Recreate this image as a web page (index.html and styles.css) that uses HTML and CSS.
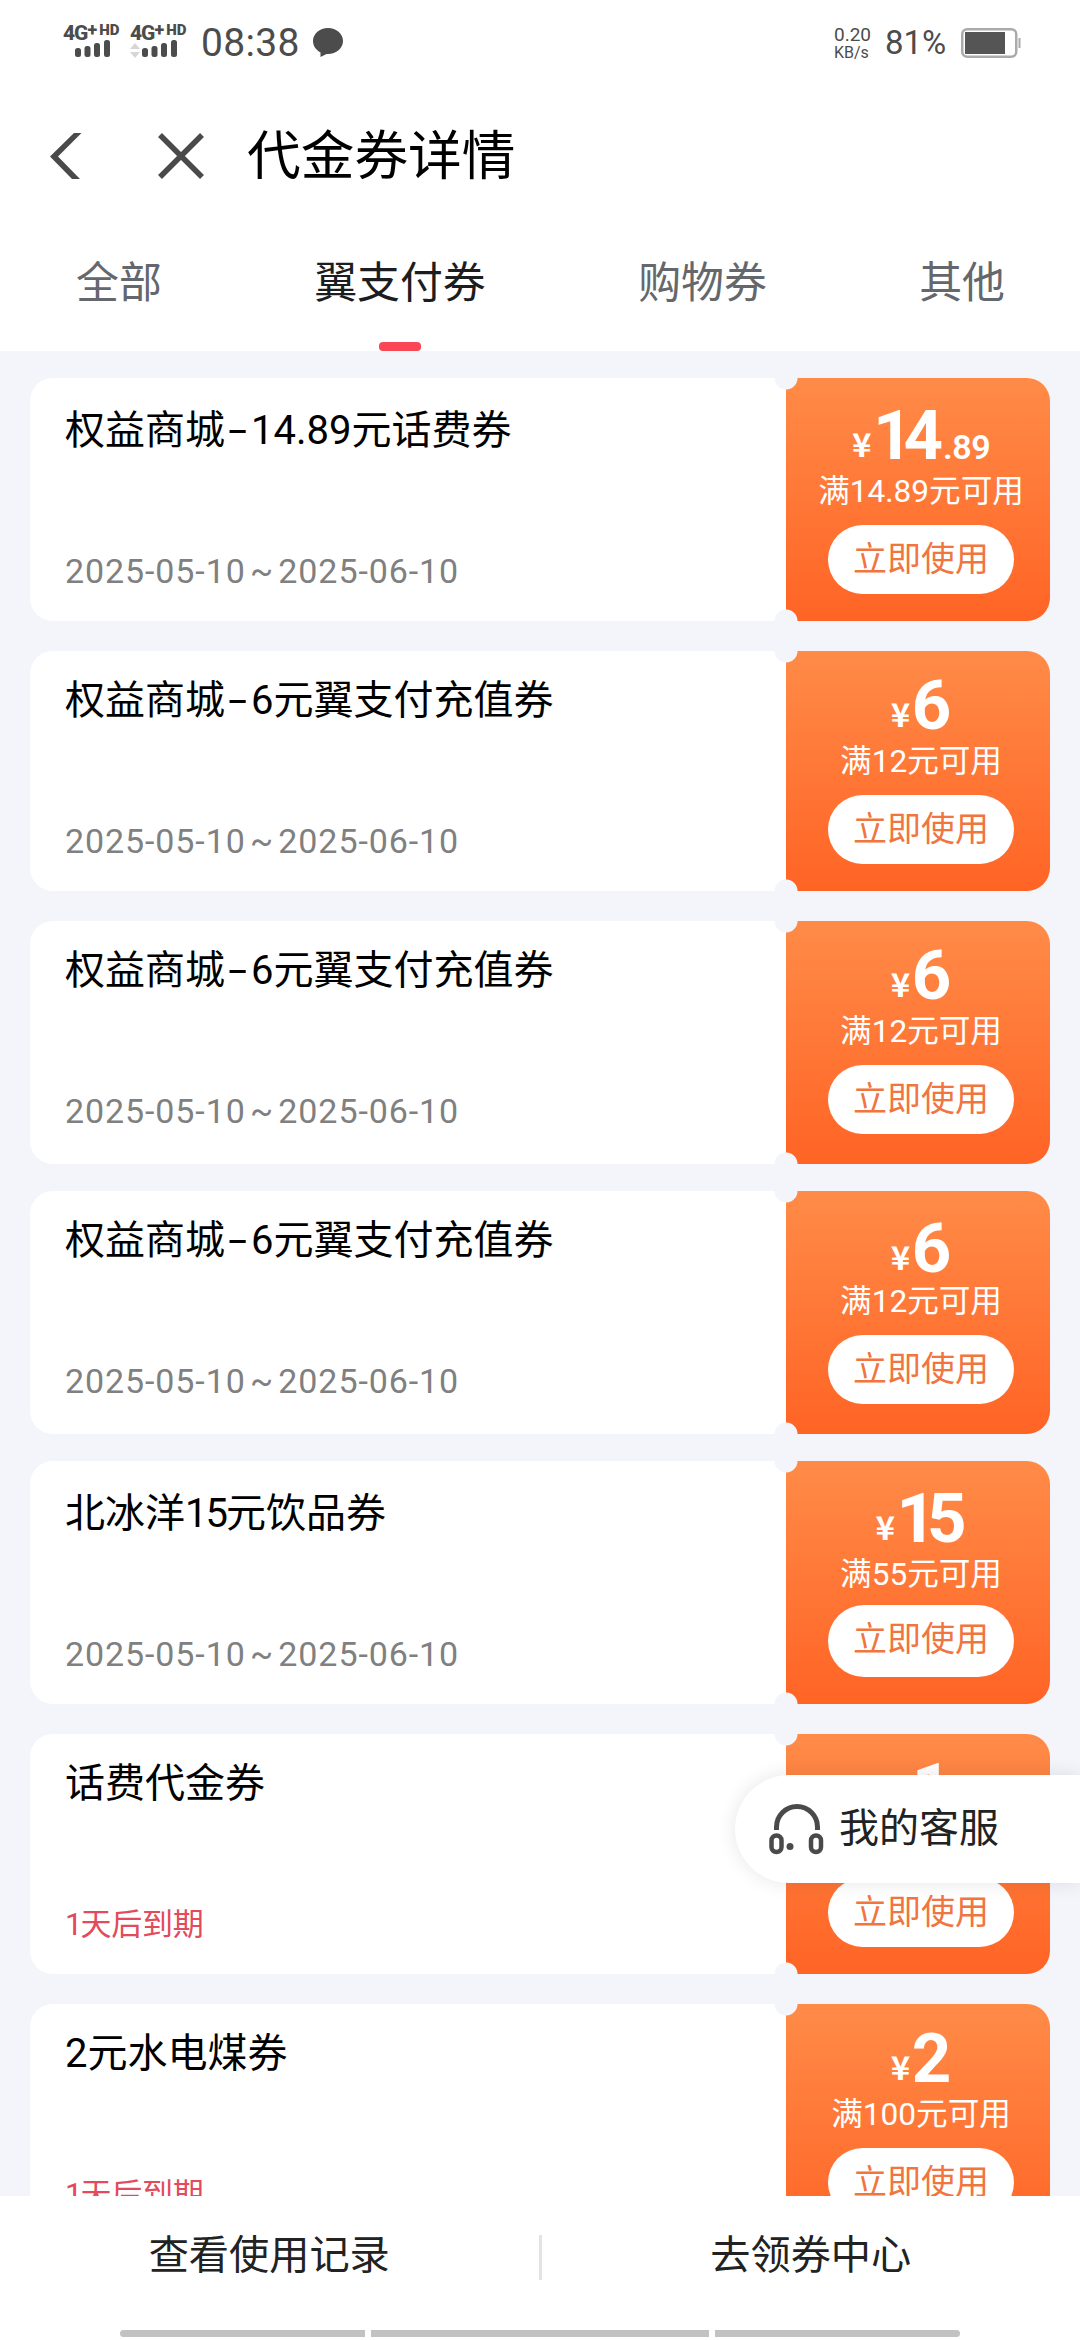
FILE: index.html
```html
<!DOCTYPE html>
<html lang="zh-CN">
<head>
<meta charset="utf-8">
<title>代金券详情</title>
<link rel="stylesheet" href="styles.css">
</head>
<body>
<div class="screen">
  <header class="statusbar">
    <div class="signal">
      <div class="net">4G<sup class="plus">+</sup><sup class="hd">HD</sup></div>
      <svg class="bars" width="52" height="18" viewBox="0 0 52 18"><g fill="#4c4c4c"><rect x="12" y="8" width="6" height="9" rx="2.5"/><rect x="21.500" y="6" width="6" height="11" rx="2.5"/><rect x="31" y="3" width="6" height="14" rx="2.500"/><rect x="41" y="0" width="6" height="17" rx="2.5"/></g></svg>
    </div>
    <div class="signal">
      <div class="net">4G<sup class="plus">+</sup><sup class="hd">HD</sup></div>
      <svg class="bars" width="52" height="18" viewBox="0 0 52 18"><path d="M0 9l5-6 5 6zM0 12l5 6 5-6z" fill="#d6d6d6"/><g fill="#4c4c4c"><rect x="12" y="8" width="6" height="9" rx="2.5"/><rect x="21.500" y="6" width="6" height="11" rx="2.5"/><rect x="31" y="3" width="6" height="14" rx="2.5"/><rect x="41" y="0" width="6" height="17" rx="2.5"/></g></svg>
    </div>
    <div class="clock">08:38</div>
    <svg class="chat" width="30" height="29" viewBox="0 0 30 29"><path d="M15 0C6.700 0 0 5.700 0 13c0 5 3 9 7.500 11.500V29l6-3H15c8.300 0 15-5.700 15-13S23.300 0 15 0z" fill="#4c4c4c"/></svg>
    <div class="speed"><span>0.20</span><span class="unit">KB/s</span></div>
    <div class="percent">81%</div>
    <svg class="battery" width="60" height="30" viewBox="0 0 60 30"><rect x="1.250" y="1.250" width="54" height="27.500" rx="5" fill="none" stroke="#aaa" stroke-width="2.5"/><rect x="4" y="4" width="40" height="22" fill="#555"/><path d="M58.500 10v10" stroke="#aaa" stroke-width="2"/></svg>
  </header>

  <div class="titlebar">
    <svg class="back" width="32" height="46" viewBox="0 0 32 46"><path d="M31.500 0H24L0 23.500 22 46h8L8 23.500z" fill="#4a4a4a"/></svg>
    <svg class="close" width="46" height="46" viewBox="0 0 46 46"><path d="M2 2l42 42M44 2L2 44" stroke="#4a4a4a" stroke-width="5.500"/></svg>
    <h1 class="title">代金券详情</h1>
  </div>

  <nav class="tabs">
    <a class="tab">全部</a>
    <a class="tab tab-active">翼支付券</a>
    <a class="tab">购物券</a>
    <a class="tab">其他</a>
  </nav>

  <main class="list">
    <article class="coupon coupon-low">
      <div class="info"><h2 class="name">权益商城<span class="dash">-</span>14.89元话费券</h2><p class="date">2025-05-10 ~ 2025-06-10</p></div>
      <div class="offer"><p class="amount"><span class="yen">¥</span><b class="num pair">14</b><span class="cents">.89</span></p><p class="rule">满14.89元可用</p><a class="use">立即使用</a></div>
    </article>
    <article class="coupon coupon-short">
      <div class="info"><h2 class="name">权益商城<span class="dash">-</span>6元翼支付充值券</h2><p class="date">2025-05-10 ~ 2025-06-10</p></div>
      <div class="offer"><p class="amount"><span class="yen">¥</span><b class="num">6</b></p><p class="rule">满12元可用</p><a class="use">立即使用</a></div>
    </article>
    <article class="coupon">
      <div class="info"><h2 class="name">权益商城<span class="dash">-</span>6元翼支付充值券</h2><p class="date">2025-05-10 ~ 2025-06-10</p></div>
      <div class="offer"><p class="amount"><span class="yen">¥</span><b class="num">6</b></p><p class="rule">满12元可用</p><a class="use">立即使用</a></div>
    </article>
    <article class="coupon">
      <div class="info"><h2 class="name">权益商城<span class="dash">-</span>6元翼支付充值券</h2><p class="date">2025-05-10 ~ 2025-06-10</p></div>
      <div class="offer"><p class="amount amount-low"><span class="yen">¥</span><b class="num">6</b></p><p class="rule">满12元可用</p><a class="use">立即使用</a></div>
    </article>
    <article class="coupon coupon-low">
      <div class="info"><h2 class="name">北冰洋<span class="tight">15</span>元饮品券</h2><p class="date">2025-05-10 ~ 2025-06-10</p></div>
      <div class="offer"><p class="amount"><span class="yen">¥</span><b class="num pair">15</b></p><p class="rule rule-short">满55元可用</p><a class="use use-tall">立即使用</a></div>
    </article>
    <article class="coupon coupon-short">
      <div class="info"><h2 class="name">话费代金券</h2><p class="date date-soon"><span class="tight">1</span>天后到期</p></div>
      <div class="offer"><p class="amount"><span class="yen">¥</span><b class="num">1</b></p><p class="rule"></p><a class="use">立即使用</a></div>
    </article>
    <article class="coupon">
      <div class="info"><h2 class="name">2元水电煤券</h2><p class="date date-soon"><span class="tight">1</span>天后到期</p></div>
      <div class="offer"><p class="amount"><span class="yen">¥</span><b class="num">2</b></p><p class="rule">满100元可用</p><a class="use">立即使用</a></div>
    </article>
  </main>

  <footer class="footer">
    <div class="actions">
      <a class="action">查看使用记录</a>
      <a class="action">去领券中心</a>
    </div>
    <div class="gestures"><i class="g g-left"></i><i class="g g-mid"></i><i class="g g-right"></i></div>
  </footer>

  <a class="service">
    <svg width="56" height="53" viewBox="0 0 56 53"><g fill="none" stroke="#4a4a4a"><path d="M7.500 27V24a20.500 20.500 0 0 1 41 0v3" stroke-width="5"/><rect x="2.500" y="32.500" width="10" height="16.500" rx="5" stroke-width="4.500"/><rect x="42" y="32.500" width="10" height="16.500" rx="5" stroke-width="4.500"/></g><circle cx="21" cy="43.500" r="3.500" fill="#4a4a4a"/></svg>
    <span>我的客服</span>
  </a>
</div>
</body>
</html>
```
FILE: styles.css
```css
* { box-sizing: border-box; margin: 0; padding: 0; }
body {
  background: #fff;
  color: #000;
  font-family: Roboto, "Noto Sans CJK SC", sans-serif;
  font-weight: 400;
}
h1, h2 { font-weight: 400; }
.screen {
  position: relative;
  display: flex;
  flex-direction: column;
  width: 1080px;
  height: 2340px;
  overflow: hidden;
}

/* status bar */
.statusbar {
  display: flex;
  align-items: flex-start;
  height: 108px;
  padding: 24px 59px 0 63px;
  color: #4c4c4c;
}
.signal { display: flex; flex-direction: column; width: 67px; }
.net { display: flex; height: 16px; font-size: 21px; font-weight: 800; line-height: 19px; letter-spacing: -1px; }
.plus { font-size: 18px; line-height: 12px; }
.hd { padding-left: 3px; font-size: 15px; font-weight: 900; line-height: 13px; letter-spacing: 0; }
.bars { display: block; }
.clock { width: 111px; padding-left: 4px; font-size: 39px; line-height: 38px; letter-spacing: .3px; }
.chat { margin-top: 4px; margin-left: 5px; }
.speed { display: flex; flex-direction: column; width: 40px; margin-left: auto; font-size: 19px; line-height: 22px; }
.unit { font-size: 16px; line-height: 13px; }
.percent { width: 62px; margin-left: 11px; font-size: 33px; font-weight: 400; line-height: 38px; }
.battery { margin-top: 4px; margin-left: 14px; }

/* title */
.titlebar { display: flex; align-items: center; height: 96px; padding-left: 50px; }
.close { margin-left: 76px; }
.title { margin-left: 43px; padding-top: 2px; font-size: 53.700px; line-height: 90px; }

/* tabs */
.tabs {
  display: flex;
  justify-content: space-between;
  flex: none;
  height: 147px;
  padding: 0 75px 0 76px;
}
.tab {
  display: flex;
  flex-direction: column;
  align-items: center;
  font-size: 42.900px;
  line-height: 158px;
  color: #64676c;
}
.tab-active { color: #1c1d20; }
.tab-active::after {
  content: "";
  width: 42px;
  height: 9px;
  margin-top: -20px;
  border-radius: 4px;
  background: #fb4655;
}

/* coupons */
.list {
  display: grid;
  grid-template-rows: 273px 270px 270px 270px 273px 270px 243px;
  align-items: start;
  flex: none;
  height: 1845px;
  padding: 27px 30px 0;
  overflow: hidden;
  background: #f4f5fa;
}
.coupon {
  display: flex;
  height: 243px;
  border-radius: 23px;
  background: #fff;
  overflow: hidden;
}
.coupon-short { height: 240px; }
.info {
  display: flex;
  flex-direction: column;
  flex: 1;
  padding: 20px 35px 0;
  background:
    radial-gradient(circle at 100% 0, #f4f5fa 11px, transparent 12px),
    radial-gradient(circle at 100% 100%, #f4f5fa 11px, transparent 12px);
}
.name { height: 140px; font-size: 40px; line-height: 60px; white-space: nowrap; }
.dash { display: inline-block; transform: scaleX(1.700); margin: 0 8px 0 7px; }
.tight { letter-spacing: -2px; }
.date { font-size: 34px; line-height: 60px; letter-spacing: .9px; word-spacing: -5px; color: #808080; }
.date-soon { font-size: 31px; line-height: 61px; letter-spacing: -.2px; color: #e34a5b; }
.offer {
  display: flex;
  flex-direction: column;
  align-items: center;
  width: 264px;
  padding: 15px 0 0 6px;
  color: #fff;
  background:
    radial-gradient(circle at 0 0, #f4f5fa 11px, transparent 12px),
    radial-gradient(circle at 0 100%, #f4f5fa 11px, transparent 12px),
    linear-gradient(#ff8b48, #ff6425);
}
.amount { display: flex; align-items: baseline; height: 76px; line-height: 80px; white-space: nowrap; }
.amount-low { padding-top: 3px; }
.yen { width: 20px; margin-right: 1px; font-family: "Noto Sans CJK SC", sans-serif; font-size: 33px; font-weight: 700; transform: translateY(-2px); }
.num { font-size: 69px; font-weight: 700; }
.pair { letter-spacing: -9px; padding-right: 9px; }
.cents { font-size: 34px; font-weight: 600; letter-spacing: -.5px; }
.rule { height: 53px; font-size: 31.600px; line-height: 39px; }
.rule-short { height: 50px; }
.use {
  width: 186px;
  height: 69px;
  border-radius: 36px;
  background: #fff;
  color: #f0753f;
  font-size: 34px;
  line-height: 68px;
  text-align: center;
}
.use-tall { height: 72px; }
.coupon-low .info { padding-top: 23px; }
.coupon-low .offer { padding-top: 18px; }

/* footer */
.footer { display: flex; flex-direction: column; height: 144px; background: #fff; }
.actions { display: flex; align-items: center; height: 123px; }
.action { flex: 1; height: 45px; font-size: 40.200px; line-height: 41px; color: #222; text-align: center; }
.action + .action { border-left: 3px solid #e3e3e3; }
.gestures { display: flex; gap: 6px; height: 7px; margin: 11px 120px 0; }
.g { flex: 338; background: #c2c2c2; }
.g-left { flex: 245; border-radius: 4px 0 0 4px; }
.g-right { flex: 245; border-radius: 0 4px 4px 0; }

/* floating service button */
.service {
  position: absolute;
  top: 1775px;
  right: 0;
  display: flex;
  align-items: center;
  gap: 14px;
  width: 345px;
  height: 108px;
  padding-left: 34px;
  border-radius: 54px 0 0 54px;
  background: #fff;
  box-shadow: 0 0 18px rgba(40, 50, 80, .12);
  color: #222;
  font-size: 40px;
  line-height: 60px;
}
```
